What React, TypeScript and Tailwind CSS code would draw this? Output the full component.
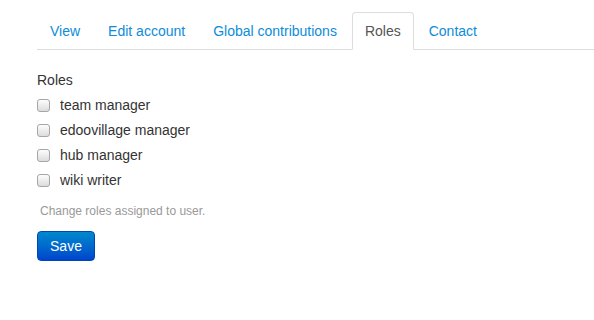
import { useState } from "react";

const tabs = ["View", "Edit account", "Global contributions", "Roles", "Contact"];
const roles = ["team manager", "edoovillage manager", "hub manager", "wiki writer"];

export default function App() {
  const [checked, setChecked] = useState<Record<string, boolean>>({});

  return (
    <div className="min-h-screen w-[594px] bg-white pl-[37px] pt-3 font-['Liberation_Sans',Arial,sans-serif] text-[14px] text-[#333]">
      {/* Tabs */}
      <ul className="flex border-b border-[#ddd]">
        {tabs.map((t) => {
          const active = t === "Roles";
          return (
            <li key={t} className="mr-[2px] -mb-px">
              <a
                href="#"
                className={
                  active
                    ? "block rounded-t-[4px] border border-[#ddd] border-b-white bg-white px-3 py-2 leading-5 text-[#555]"
                    : "block rounded-t-[4px] border border-transparent px-3 py-2 leading-5 text-[#0d8cd8]"
                }
              >
                {t}
              </a>
            </li>
          );
        })}
      </ul>

      {/* Roles form */}
      <div className="pt-[20px]">
        <div className="leading-5">Roles</div>
        <div className="mt-[5px] flex flex-col gap-[5px]">
          {roles.map((r) => (
            <label key={r} className="flex h-5 cursor-pointer items-center leading-5">
              <span
                onClick={() => setChecked({ ...checked, [r]: !checked[r] })}
                className="mr-[10px] h-[13px] w-[13px] rounded-[3px] border border-[#a6a6a6] bg-gradient-to-b from-[#fdfdfd] to-[#dcdcdc]"
              >
                {checked[r] && <span className="block text-center text-[10px] leading-[11px]">✓</span>}
              </span>
              {r}
            </label>
          ))}
        </div>
        <p className="mt-[13px] pl-[3px] text-[12px] leading-4 text-[#999]">Change roles assigned to user.</p>
        <button className="mt-[12px] h-[30px] w-[58px] rounded-[4px] border border-[#0046b8] bg-gradient-to-b from-[#0088cc] to-[#0044cc] text-[14px] text-white">
          Save
        </button>
      </div>
    </div>
  );
}
